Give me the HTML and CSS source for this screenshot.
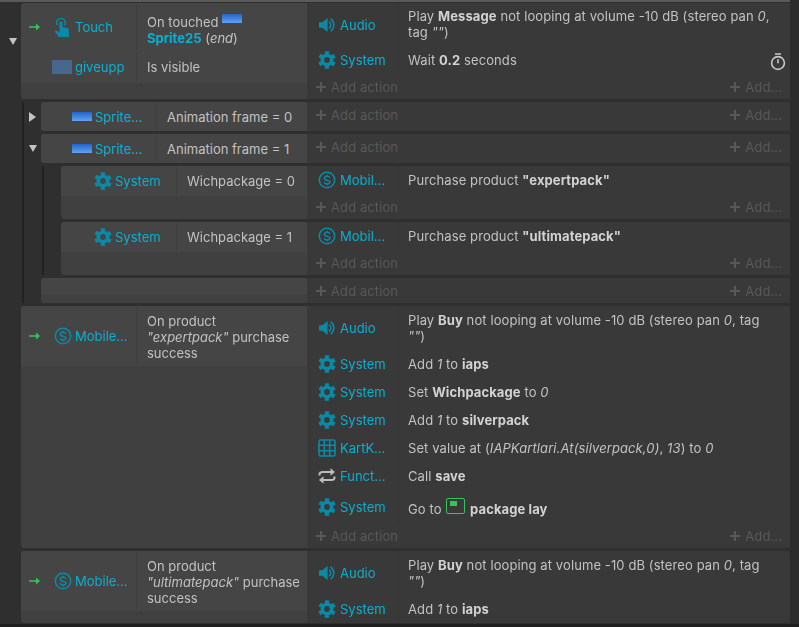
FILE: index.html
```html
<!DOCTYPE html>
<html lang="en">
<head>
<meta charset="utf-8">
<title>Event sheet</title>
<link rel="stylesheet" href="styles.css">
</head>
<body>
<svg class="defs" width="0" height="0" aria-hidden="true">
  <symbol id="gear" viewBox="0 0 18 18">
    <circle cx="9" cy="9" r="4.7" fill="none" stroke="currentColor" stroke-width="3.6"/>
    <circle cx="9" cy="9" r="7" fill="none" stroke="currentColor" stroke-width="3.6" stroke-dasharray="3.9 3.43" transform="rotate(-106 9 9)"/>
  </symbol>
  <symbol id="speaker" viewBox="0 0 18 18">
    <path d="M1 6.2h3.4L9.6 2v14l-5.2-4.2H1z" fill="currentColor"/>
    <path d="M11.4 6a4 4 0 0 1 0 6M13 3.2a7.4 7.4 0 0 1 0 11.6" fill="none" stroke="currentColor" stroke-width="1.5" stroke-linecap="round"/>
  </symbol>
  <symbol id="dollar" viewBox="0 0 18 18">
    <circle cx="9" cy="9" r="7.7" fill="none" stroke="currentColor" stroke-width="1.5"/>
    <path d="M11.8 6.7C11.3 5.6 10.2 5.2 9 5.2 7.4 5.2 6.3 6 6.3 7.2c0 3 5.6 1.3 5.6 3.9 0 1.2-1.2 1.9-2.8 1.9-1.4 0-2.5-.5-3-1.7M9 3.8v1.4M9 13v1.4" fill="none" stroke="currentColor" stroke-width="1.4"/>
  </symbol>
  <symbol id="hand" viewBox="0 0 14 18">
    <path d="M5 9.500V4.500a1.500 1.500 0 0 1 3 0v4l4.500 1c1 .3 1.500 1 1.500 2V18H4.500L1 13.500c-.6-1 .4-2.200 1.500-1.500L5 13.500z" fill="currentColor"/>
    <path d="M3.300 6.800a4 4 0 1 1 6.400 0" fill="none" stroke="currentColor" stroke-width="1.300"/>
  </symbol>
  <symbol id="table" viewBox="0 0 18 18">
    <rect x="1" y="1" width="16" height="16" rx="1.500" fill="none" stroke="currentColor" stroke-width="1.600"/>
    <path d="M6.300 1v16M11.700 1v16M1 6.300h16M1 11.700h16" stroke="currentColor" stroke-width="1.500"/>
  </symbol>
  <symbol id="loop" viewBox="0 0 18 18">
    <path d="M1.500 8.500V7.500C1.500 5.800 2.800 5 4.500 5H13" fill="none" stroke="currentColor" stroke-width="2"/>
    <path d="M12.500 1.300 17 5l-4.500 3.700z" fill="currentColor"/>
    <path d="M16.500 9.500v1c0 1.700-1.300 2.500-3 2.500H5" fill="none" stroke="currentColor" stroke-width="2"/>
    <path d="M5.500 9.300 1 13l4.500 3.700z" fill="currentColor"/>
  </symbol>
  <symbol id="plus" viewBox="0 0 10 10">
    <path d="M4 0h2v4h4v2H6v4H4V6H0V4h4z" fill="currentColor"/>
  </symbol>
  <symbol id="arrow" viewBox="0 0 11 8">
    <path d="M0 3.300h7V0.500L11 4 7 7.500V4.700H0z" fill="currentColor"/>
  </symbol>
  <symbol id="timer" viewBox="0 0 16 18">
    <path d="M5 1h6" stroke="currentColor" stroke-width="1.500"/>
    <circle cx="8" cy="10" r="6.400" fill="none" stroke="currentColor" stroke-width="1.600"/>
    <path d="M8 6.200v4" stroke="currentColor" stroke-width="1.600"/>
  </symbol>
</svg>

<main class="sheet">
  <div class="tree-row">
    <div class="gutter gutter-first"><span class="tri-down"></span></div>
    <section class="event">
      <div class="conds">
        <div class="cond cond-touch">
          <div class="obj"><span class="obj-icon"><svg class="trigger"><use href="#arrow"/></svg><svg class="ic ic-hand"><use href="#hand"/></svg></span><span class="name">Touch</span></div>
          <div class="cond-text">On touched <span class="sprite sprite-inline"></span><br><b class="link">Sprite25</b> (<i>end</i>)</div>
        </div>
        <div class="cond cond-visible">
          <div class="obj"><span class="obj-icon"><span class="thumb"></span></span><span class="name">giveupp</span></div>
          <div class="cond-text">Is visible</div>
        </div>
      </div>
      <div class="acts">
        <div class="act act-two act-first">
          <div class="act-obj"><svg class="ic"><use href="#speaker"/></svg><span class="name">Audio</span></div>
          <div class="act-text"><span>Play <b>Message</b> not looping at volume -10 dB (stereo pan <i>0</i>, tag <i>""</i>)</span></div>
        </div>
        <div class="act">
          <div class="act-obj"><svg class="ic"><use href="#gear"/></svg><span class="name">System</span></div>
          <div class="act-text act-wait"><span>Wait <b>0.2</b> seconds</span><svg class="ic-timer"><use href="#timer"/></svg></div>
        </div>
        <div class="add add-first"><span class="add-item"><svg class="plus"><use href="#plus"/></svg>Add action</span><span class="add-item"><svg class="plus"><use href="#plus"/></svg>Add...</span></div>
      </div>
    </section>
  </div>

  <div class="children">
    <div class="tree-row">
      <div class="gutter gutter-sub"><span class="tri-right"></span></div>
      <section class="event">
        <div class="conds"><div class="cond cond-sub">
          <div class="obj"><span class="obj-icon"><span class="sprite"></span></span><span class="name">Sprite...</span></div>
          <div class="cond-text">Animation frame = 0</div>
        </div></div>
        <div class="acts"><div class="add add-top"><span class="add-item"><svg class="plus"><use href="#plus"/></svg>Add action</span><span class="add-item"><svg class="plus"><use href="#plus"/></svg>Add...</span></div></div>
      </section>
    </div>
    <div class="tree-row">
      <div class="gutter gutter-sub"><span class="tri-down"></span></div>
      <section class="event">
        <div class="conds"><div class="cond cond-sub">
          <div class="obj"><span class="obj-icon"><span class="sprite"></span></span><span class="name">Sprite...</span></div>
          <div class="cond-text">Animation frame = 1</div>
        </div></div>
        <div class="acts"><div class="add add-top"><span class="add-item"><svg class="plus"><use href="#plus"/></svg>Add action</span><span class="add-item"><svg class="plus"><use href="#plus"/></svg>Add...</span></div></div>
      </section>
    </div>

    <div class="children">
      <div class="tree-row">
        <div class="gutter"></div>
        <section class="event">
          <div class="conds"><div class="cond cond-pack">
            <div class="obj"><span class="obj-icon"><svg class="ic"><use href="#gear"/></svg></span><span class="name">System</span></div>
            <div class="cond-text">Wichpackage = 0</div>
          </div></div>
          <div class="acts">
            <div class="act">
              <div class="act-obj"><svg class="ic"><use href="#dollar"/></svg><span class="name">Mobil...</span></div>
              <div class="act-text"><span>Purchase product <b>"expertpack"</b></span></div>
            </div>
            <div class="add add-pack"><span class="add-item"><svg class="plus"><use href="#plus"/></svg>Add action</span><span class="add-item"><svg class="plus"><use href="#plus"/></svg>Add...</span></div>
          </div>
        </section>
      </div>
      <div class="tree-row">
        <div class="gutter"></div>
        <section class="event">
          <div class="conds"><div class="cond cond-pack">
            <div class="obj"><span class="obj-icon"><svg class="ic"><use href="#gear"/></svg></span><span class="name">System</span></div>
            <div class="cond-text">Wichpackage = 1</div>
          </div></div>
          <div class="acts">
            <div class="act">
              <div class="act-obj"><svg class="ic"><use href="#dollar"/></svg><span class="name">Mobil...</span></div>
              <div class="act-text"><span>Purchase product <b>"ultimatepack"</b></span></div>
            </div>
            <div class="add add-pack"><span class="add-item"><svg class="plus"><use href="#plus"/></svg>Add action</span><span class="add-item"><svg class="plus"><use href="#plus"/></svg>Add...</span></div>
          </div>
        </section>
      </div>
    </div>

    <div class="tree-row">
      <div class="gutter"></div>
      <section class="event">
        <div class="conds"><div class="cond cond-empty"></div></div>
        <div class="acts"><div class="add add-empty"><span class="add-item"><svg class="plus"><use href="#plus"/></svg>Add action</span><span class="add-item"><svg class="plus"><use href="#plus"/></svg>Add...</span></div></div>
      </section>
    </div>
  </div>

  <div class="tree-row">
    <div class="gutter"></div>
    <section class="event">
      <div class="conds">
        <div class="cond cond-product">
          <div class="obj"><span class="obj-icon"><svg class="trigger"><use href="#arrow"/></svg><svg class="ic"><use href="#dollar"/></svg></span><span class="name">Mobile...</span></div>
          <div class="cond-text">On product<br><i>"expertpack"</i> purchase<br>success</div>
        </div>
      </div>
      <div class="acts">
        <div class="act act-two">
          <div class="act-obj"><svg class="ic"><use href="#speaker"/></svg><span class="name">Audio</span></div>
          <div class="act-text"><span>Play <b>Buy</b> not looping at volume -10 dB (stereo pan <i>0</i>, tag <i>""</i>)</span></div>
        </div>
        <div class="act">
          <div class="act-obj"><svg class="ic"><use href="#gear"/></svg><span class="name">System</span></div>
          <div class="act-text"><span>Add <i>1</i> to <b>iaps</b></span></div>
        </div>
        <div class="act">
          <div class="act-obj"><svg class="ic"><use href="#gear"/></svg><span class="name">System</span></div>
          <div class="act-text"><span>Set <b>Wichpackage</b> to <i>0</i></span></div>
        </div>
        <div class="act">
          <div class="act-obj"><svg class="ic"><use href="#gear"/></svg><span class="name">System</span></div>
          <div class="act-text"><span>Add <i>1</i> to <b>silverpack</b></span></div>
        </div>
        <div class="act">
          <div class="act-obj"><svg class="ic"><use href="#table"/></svg><span class="name">KartK...</span></div>
          <div class="act-text"><span>Set value at (<i>IAPKartlari.At(silverpack,0)</i>, <i>13</i>) to <i>0</i></span></div>
        </div>
        <div class="act">
          <div class="act-obj"><svg class="ic ic-grey"><use href="#loop"/></svg><span class="name">Funct...</span></div>
          <div class="act-text"><span>Call <b>save</b></span></div>
        </div>
        <div class="act act-goto">
          <div class="act-obj"><svg class="ic"><use href="#gear"/></svg><span class="name">System</span></div>
          <div class="act-text"><span>Go to <span class="layout-ic"><span class="layout-dot"></span></span> <b>package lay</b></span></div>
        </div>
        <div class="add"><span class="add-item"><svg class="plus"><use href="#plus"/></svg>Add action</span><span class="add-item"><svg class="plus"><use href="#plus"/></svg>Add...</span></div>
      </div>
    </section>
  </div>

  <div class="tree-row">
    <div class="gutter"></div>
    <section class="event">
      <div class="conds">
        <div class="cond cond-product">
          <div class="obj"><span class="obj-icon"><svg class="trigger"><use href="#arrow"/></svg><svg class="ic"><use href="#dollar"/></svg></span><span class="name">Mobile...</span></div>
          <div class="cond-text">On product<br><i>"ultimatepack"</i> purchase<br>success</div>
        </div>
      </div>
      <div class="acts">
        <div class="act act-two">
          <div class="act-obj"><svg class="ic"><use href="#speaker"/></svg><span class="name">Audio</span></div>
          <div class="act-text"><span>Play <b>Buy</b> not looping at volume -10 dB (stereo pan <i>0</i>, tag <i>""</i>)</span></div>
        </div>
        <div class="act">
          <div class="act-obj"><svg class="ic"><use href="#gear"/></svg><span class="name">System</span></div>
          <div class="act-text"><span>Add <i>1</i> to <b>iaps</b></span></div>
        </div>
      </div>
    </section>
  </div>
</main>
</body>
</html>
```

FILE: styles.css
```css
* { box-sizing: border-box; }

html, body {
  margin: 0;
  height: 100%;
  overflow: hidden;
  background: #1f1f1f;
}

body {
  font-family: Inter, "Liberation Sans", sans-serif;
  font-size: 13px;
  line-height: 16px;
  letter-spacing: 0.1px;
  color: #c2c2c2;
}

.defs { position: absolute; }

.sheet {
  height: 624px;
  width: 790px;
  padding-left: 4px;
  padding-top: 1px;
  display: flex;
  flex-direction: column;
  gap: 3px;
  background: #2f2f2f;
  border-top: 2px solid #5a5a5a;
  box-shadow: 9px 0 0 #2c2c2c;
  filter: blur(0.35px);
}

.tree-row { display: flex; }

.gutter {
  width: 17px;
  flex: none;
  display: flex;
  justify-content: center;
  align-items: center;
}

.gutter-first { align-items: flex-start; padding-top: 35px; }

.tri-down {
  width: 0;
  height: 0;
  border-left: 4.5px solid transparent;
  border-right: 4.5px solid transparent;
  border-top: 7px solid #c4c4c4;
}

.tri-right {
  width: 0;
  height: 0;
  border-top: 5px solid transparent;
  border-bottom: 5px solid transparent;
  border-left: 7px solid #c4c4c4;
}

.children {
  margin-left: 18px;
  border-left: 2px solid #222;
  display: flex;
  flex-direction: column;
  gap: 3px;
}

.event {
  flex: 1;
  display: flex;
  background: #404040;
  border-radius: 3px;
  overflow: hidden;
}

.conds { flex: 1; min-width: 0; }

.acts {
  width: 483px;
  flex: none;
  background: #393939;
}

.cond {
  display: flex;
  background: #454545;
}

.cond-touch { height: 48px; }
.cond-visible { height: 32px; }
.cond-sub { height: 29px; }
.cond-pack { height: 30px; }
.cond-empty { height: 17px; }
.cond-product { height: 60px; }

.obj {
  width: 115px;
  flex: none;
  display: flex;
  align-items: center;
  gap: 3px;
}

.obj-icon {
  width: 51px;
  flex: none;
  padding-left: 8px;
  display: flex;
  justify-content: flex-end;
  align-items: center;
}

.trigger {
  width: 11px;
  height: 8px;
  margin-right: auto;
  color: #35c45a;
}

.name { color: #08b0d0; white-space: nowrap; letter-spacing: 0; }

.ic {
  width: 18px;
  height: 18px;
  color: #0a8aa6;
  flex: none;
}

.ic-hand { width: 15px; height: 19px; margin-right: 3px; }
.ic-grey { color: #bcbcbc; }

.thumb {
  width: 20px;
  height: 14px;
  background: #47688c;
}

.sprite {
  width: 20px;
  height: 9px;
  flex: none;
  background: linear-gradient(#1f66c9, #62a2f2);
}

.sprite-inline {
  display: inline-block;
  vertical-align: 4px;
  margin-top: -3px;
}

.cond-text {
  flex: 1;
  border-left: 1px solid #3e3e3e;
  margin: 1px 0;
  padding: 0 0 0 10px;
  display: flex;
  align-items: center;
  letter-spacing: 0;
  white-space: nowrap;
}

.cond-touch .cond-text { display: block; padding-top: 10px; }
.cond-product .cond-text { display: block; padding-top: 6px; }

b { font-weight: 700; color: #d2d2d2; }
b.link { color: #08b0d0; }

.act {
  height: 28px;
  display: flex;
}

.act-two { height: 44px; }
.act-first { height: 43px; }
.act-goto { height: 34px; }

.act-obj {
  width: 91px;
  flex: none;
  padding-left: 11px;
  display: flex;
  align-items: center;
  gap: 4px;
}

.act-text {
  flex: 1;
  min-width: 0;
  border-left: 1px solid #353535;
  padding: 0 18px 0 9px;
  display: flex;
  align-items: center;
}

.act-two .act-text { display: block; padding-top: 6px; }
.act-first .act-text { padding-top: 5px; }
.act-goto .act-text { padding-top: 4px; }

.act-wait { justify-content: space-between; padding-right: 4px; }

.ic-timer { width: 16px; height: 18px; color: #c8c8c8; margin-top: 4px; }

.layout-ic {
  display: inline-block;
  width: 19px;
  height: 16px;
  border: 1.5px solid #35c45a;
  border-radius: 2px;
  padding: 2px 3px;
  margin: -5px 1px 0;
  vertical-align: 0;
}

.layout-dot {
  display: block;
  width: 7px;
  height: 5px;
  background: #35c45a;
}

.add {
  height: 24px;
  padding: 0 8px 0 9px;
  display: flex;
  justify-content: space-between;
  align-items: center;
  color: #585858;
}

.add-first { height: 25px; }
.add-top { height: 26px; }
.add-pack { height: 25px; }
.add-empty { height: 25px; }

.add-item { display: flex; align-items: center; gap: 5px; }

.plus { width: 10px; height: 10px; }
```
